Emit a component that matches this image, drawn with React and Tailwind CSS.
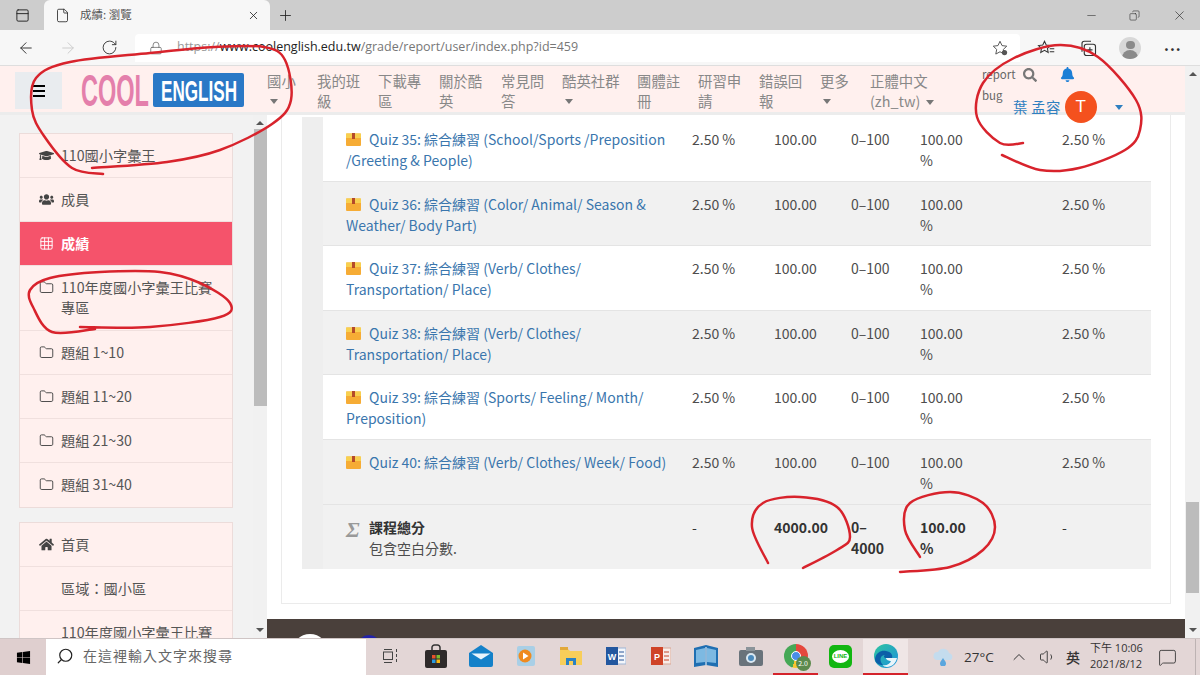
import React from "react";
import {
  ArrowLeft,
  ArrowRight,
  Copy,
  File,
  Folder,
  Grid3x3,
  Lock,
  Minus,
  Plus,
  RotateCw,
  Search,
  X,
  ChevronUp,
  Volume1,
  MessageSquare,
  PanelTop,
} from "lucide-react";
import { FaBell, FaGraduationCap, FaHome, FaSearch, FaUsers, FaWindows } from "react-icons/fa";

const navItems = [
  { lines: ["國小"], caret: true, width: "w-[50px]" },
  { lines: ["我的班", "級"], width: "w-[61px]" },
  { lines: ["下載專", "區"], width: "w-[61px]" },
  { lines: ["關於酷", "英"], width: "w-[62px]" },
  { lines: ["常見問", "答"], width: "w-[61px]" },
  { lines: ["酷英社群"], caret: true, width: "w-[75px]" },
  { lines: ["團體註", "冊"], width: "w-[61px]" },
  { lines: ["研習申", "請"], width: "w-[61px]" },
  { lines: ["錯誤回", "報"], width: "w-[61px]" },
  { lines: ["更多"], caret: true, width: "w-[50px]" },
];

const quizRows = [
  "Quiz 35: 綜合練習 (School/Sports /Preposition /Greeting & People)",
  "Quiz 36: 綜合練習 (Color/ Animal/ Season & Weather/ Body Part)",
  "Quiz 37: 綜合練習 (Verb/ Clothes/ Transportation/ Place)",
  "Quiz 38: 綜合練習 (Verb/ Clothes/ Transportation/ Place)",
  "Quiz 39: 綜合練習 (Sports/ Feeling/ Month/ Preposition)",
  "Quiz 40: 綜合練習 (Verb/ Clothes/ Week/ Food)",
];

const marks = [
  [[92, 168], [167, 162], [220, 150], [272, 124], [291, 100], [285, 60], [264, 47], [215, 47], [150, 53], [70, 62], [36, 78], [32, 110], [44, 136], [72, 168], [103, 174]],
  [[1023, 143], [1000, 143], [977, 117], [983, 83], [1014, 58], [1060, 45], [1098, 57], [1136, 100], [1140, 130], [1125, 150], [1079, 168], [1040, 170], [1002, 155]],
  [[95, 329], [52, 332], [33, 307], [30, 290], [50, 278], [100, 272], [160, 272], [200, 283], [230, 303], [220, 317], [150, 327], [80, 327]],
  [[768, 563], [752, 527], [763, 503], [800, 497], [837, 507], [850, 537], [837, 550], [803, 568]],
  [[920, 557], [905, 530], [910, 503], [950, 492], [983, 503], [995, 527], [983, 550], [950, 567], [900, 572]],
];

// smooth hand-drawn stroke through the points
const toPath = (pts) => {
  let d = `M${pts[0][0]} ${pts[0][1]}`;
  for (let i = 0; i < pts.length - 1; i++) {
    const p0 = pts[i - 1] || pts[i];
    const p1 = pts[i];
    const p2 = pts[i + 1];
    const p3 = pts[i + 2] || p2;
    d += ` C${p1[0] + (p2[0] - p0[0]) / 6} ${p1[1] + (p2[1] - p0[1]) / 6} ${p2[0] - (p3[0] - p1[0]) / 6} ${p2[1] - (p3[1] - p1[1]) / 6} ${p2[0]} ${p2[1]}`;
  }
  return d;
};

const Caret = ({ className = "border-t-[#777]" }) => (
  <span className={`inline-block w-0 h-0 border-x-[4.5px] border-x-transparent border-t-[5px] ${className}`} />
);

const SideItem = ({ icon: Icon, iconClass, active, tall, children }) => (
  <div
    className={`flex gap-[6px] pl-[18px] pr-[14px] border-b border-[#f0e0de] last:border-b-0 ${
      tall ? "h-[65px]" : "h-[44px]"
    } ${active ? "bg-[#f5536b] text-white font-bold" : "text-[#555]"} items-start pt-[11px]`}
  >
    <span className="w-[17px] h-[20px] flex items-center justify-center shrink-0">
      {Icon && <Icon size={15} strokeWidth={1.500} className={iconClass || (active ? "text-white" : "text-[#444]")} />}
    </span>
    <span className="leading-[20px]">{children}</span>
  </div>
);

const QuizIcon = () => (
  <svg width="15" height="13" viewBox="0 0 15 13" className="inline-block mr-[8px] align-[-1px]">
    <rect y="0.5" width="15" height="12.5" rx="1" fill="#f6ac35" />
    <rect y="0.5" width="15" height="4.5" fill="#f8d04f" />
    <rect x="6" y="0" width="3" height="6" fill="#b5492a" />
  </svg>
);

const QuizRow = ({ title, grey }) => (
  <div
    className={`grid grid-cols-[369px_82px_77px_69px_142px_88px] h-[64.6px] pt-[12px] border-b border-[#e4e4e4] ${
      grey ? "bg-[#f1f1f1]" : "bg-white"
    }`}
  >
    <div className="pl-[23px] pr-[20px] text-[#3a76ad]">
      <QuizIcon />
      {title}
    </div>
    <div>2.50 %</div>
    <div>100.00</div>
    <div>0–100</div>
    <div>
      100.00
      <br />%
    </div>
    <div>2.50 %</div>
  </div>
);

const TaskSlot = ({ active, underline, children }) => (
  <div
    className={`w-[45px] h-full flex items-center justify-center shrink-0 border-b-2 ${
      underline ? "border-b-[#d4232b]" : "border-b-transparent"
    } ${active ? "bg-[#efe6e6]" : ""}`}
  >
    {children}
  </div>
);

const Taskbar = () => (
  <div className="h-[37px] shrink-0 flex bg-[#e3d6d6] border-t border-[#cfc5c5] text-[#333]">
    <div className="w-[46px] flex items-center justify-center bg-[#dfcfcf]">
      <FaWindows className="text-[15px] text-black" />
    </div>
    <div className="w-[320px] flex items-center gap-[9px] pl-[10px] pb-[3px] bg-white text-[14px] tracking-[1px] text-[#666]">
      <Search size={18} strokeWidth={1.600} className="-scale-x-100 text-[#222]" />
      <span>在這裡輸入文字來搜尋</span>
    </div>
    <div className="flex h-full pl-[2px]">
      <TaskSlot>
        <svg width="16" height="16" viewBox="0 0 16 16" fill="none" stroke="#444" strokeWidth="1">
          <rect x="0.5" y="4" width="9" height="7.5" />
          <path d="M1 1.500h8M1 14.500h8M13.500 1v3M13.500 6v3M13.500 11v3" />
        </svg>
      </TaskSlot>
      <TaskSlot>
        <svg width="22" height="24" viewBox="0 0 22 24">
          <path d="M7 6V3.500A2.500 2.500 0 0 1 9.500 1h3A2.500 2.500 0 0 1 15 3.500V6" fill="none" stroke="#333" strokeWidth="1.500" />
          <rect y="6" width="22" height="18" rx="2" fill="#2e2a2a" />
          <rect x="7" y="11" width="3.500" height="3.500" fill="#e8502c" />
          <rect x="11.500" y="11" width="3.500" height="3.500" fill="#7fba2e" />
          <rect x="7" y="15.500" width="3.500" height="3.500" fill="#2a9ae0" />
          <rect x="11.500" y="15.500" width="3.500" height="3.500" fill="#f7b814" />
        </svg>
      </TaskSlot>
      <TaskSlot>
        <svg width="24" height="22" viewBox="0 0 24 22">
          <path d="M0 8 12 0l12 8v12a2 2 0 0 1-2 2H2a2 2 0 0 1-2-2z" fill="#1481c9" />
          <path d="M2.500 8.500h19L12 14.500z" fill="#e9f5fc" />
        </svg>
      </TaskSlot>
      <TaskSlot>
        <svg width="20" height="22" viewBox="0 0 20 22">
          <rect x="1" y="1" width="18" height="20" rx="2" fill="#a9cfe6" />
          <circle cx="9" cy="11" r="6.500" fill="#ef8a1f" />
          <path d="M7 7.500 12.500 11 7 14.500z" fill="#fff" />
        </svg>
      </TaskSlot>
      <TaskSlot>
        <svg width="22" height="18" viewBox="0 0 22 18">
          <path d="M0 2h8l2 2h12v14H0z" fill="#f8ce5a" />
          <rect y="0" width="8" height="3" fill="#e2a93a" />
          <path d="M6 11h10v7h-3v-4H9v4H6z" fill="#2b82c4" />
        </svg>
      </TaskSlot>
      <TaskSlot>
        <svg width="20" height="20" viewBox="0 0 20 20">
          <rect x="6" y="2" width="14" height="16" fill="#f3f6fb" stroke="#9db4d4" />
          <path d="M13 6h5M13 10h5M13 14h5" stroke="#2a5699" />
          <rect y="1" width="12" height="18" fill="#23579f" />
          <text x="6" y="14" textAnchor="middle" fontSize="9" fontWeight="700" fill="#fff" fontFamily="Liberation Sans">W</text>
        </svg>
      </TaskSlot>
      <TaskSlot>
        <svg width="20" height="20" viewBox="0 0 20 20">
          <rect x="6" y="2" width="14" height="16" fill="#f8ede9" stroke="#d9a695" />
          <path d="M13 6h5M13 10h5M13 14h5" stroke="#c4472a" />
          <rect y="1" width="12" height="18" fill="#cf4327" />
          <text x="6" y="14" textAnchor="middle" fontSize="9" fontWeight="700" fill="#fff" fontFamily="Liberation Sans">P</text>
        </svg>
      </TaskSlot>
      <TaskSlot>
        <svg width="24" height="24" viewBox="0 0 24 24">
          <path d="M0 4 12 1l12 3v19l-12-2-12 2z" fill="#1f6fb2" />
          <path d="M2 6l9-2v14l-9 1zM13 4l9 2v13l-9-1z" fill="#7db9e2" />
          <path d="M12 3v18" stroke="#fff" />
        </svg>
      </TaskSlot>
      <TaskSlot>
        <svg width="24" height="19" viewBox="0 0 24 19">
          <rect y="3" width="24" height="16" rx="2" fill="#69737b" />
          <rect x="7" y="0" width="9" height="4" fill="#8b949a" />
          <circle cx="12" cy="11" r="5" fill="#d9e8f2" />
          <circle cx="12" cy="11" r="3" fill="#4b8bbd" />
        </svg>
      </TaskSlot>
      <TaskSlot underline>
        <div className="relative w-[24px] h-[24px] rounded-full bg-[conic-gradient(#e5483d_0_33%,#f7c531_33%_55%,#46a856_55%_100%)] flex items-center justify-center">
          <span className="w-[10px] h-[10px] rounded-full bg-[#4a8ee8] border border-white" />
          <span className="absolute -right-[3px] -bottom-[3px] w-[15px] h-[15px] rounded-full bg-[#5c8a4e] text-[7px] leading-[15px] text-center text-white">2.0</span>
        </div>
      </TaskSlot>
      <TaskSlot>
        <div className="w-[23px] h-[23px] rounded-[5px] bg-[#12b611] flex items-center justify-center">
          <span className="w-[17px] h-[13px] rounded-[50%] bg-white text-[#12b611] text-[6px] font-bold leading-[13px] text-center font-['Liberation_Sans']">LINE</span>
        </div>
      </TaskSlot>
      <TaskSlot active underline>
        <svg width="24" height="24" viewBox="0 0 24 24">
          <defs>
            <linearGradient id="edgeA" x1="0" y1="0" x2="1" y2="1">
              <stop offset="0" stopColor="#2fc5a0" />
              <stop offset="1" stopColor="#1b8fdc" />
            </linearGradient>
          </defs>
          <circle cx="12" cy="12" r="12" fill="url(#edgeA)" />
          <path d="M1 15C2 8 8 6 12 7c5 1 7 4 6 7h-6c-2 0-3-2-1-3-5 0-6 6-2 10C5 21 1 19 1 15z" fill="#0c5fa8" />
          <path d="M12 14h11c-1 5-5 9-10 9-2 0-4-1-4-2 3 1 7-1 8-4-2 0-5-1-5-3z" fill="#fff" opacity="0.9" />
        </svg>
      </TaskSlot>
    </div>
    <div className="flex items-center h-full grow text-[14px] border-r border-[#bdb3b3] mr-[4px]">
      <svg width="26" height="18" viewBox="0 0 26 18" className="ml-[24px]">
        <path d="M5 12a4 4 0 0 1 1-8 6 6 0 0 1 11 1 4 4 0 0 1 2 7z" fill="#c4dcee" />
        <path d="M11 10c2 3 3 4 3 5.500a3 3 0 0 1-6 0c0-1.500 1-2.500 3-5.500z" fill="#5aa6de" />
      </svg>
      <span className="ml-[6px] w-[30px] text-[13.500px] font-['Open_Sans']">27°C</span>
      <ChevronUp size={20} strokeWidth={1.200} className="ml-[15px]" />
      <Volume1 size={18} strokeWidth={1.200} className="ml-[10px]" />
      <span className="ml-[9px] text-[14px] font-medium">英</span>
      <div className="ml-[10px] w-[53px] pb-[2px] text-[11px] leading-[16px] whitespace-nowrap font-['Open_Sans','Noto_Sans_CJK_TC']">
        下午 10:06
        <br />
        2021/8/12
      </div>
      <MessageSquare size={19} strokeWidth={1.100} className="ml-[15px]" />
    </div>
  </div>
);

const BrowserChrome = () => (
  <>
    <div className="h-[30px] shrink-0 bg-[#cdcdcd] flex items-end text-[#222]">
      <div className="w-[44px] h-[30px] flex items-center justify-center">
        <PanelTop size={15} strokeWidth={1.500} />
      </div>
      <div className="w-[226px] h-[30px] bg-[#f7f7f7] rounded-t-[6px] flex items-center pl-[11px] pr-[10px]">
        <File size={15} strokeWidth={1.300} />
        <span className="ml-[10px] text-[11.500px] text-[#555]">成績: 瀏覽</span>
        <X size={13} strokeWidth={1.500} className="ml-auto" />
      </div>
      <div className="w-[30px] h-[30px] flex items-center justify-center">
        <Plus size={17} strokeWidth={1.200} />
      </div>
      <div className="ml-auto flex h-[30px] items-center">
        <Minus size={13} strokeWidth={1} className="mr-[31px]" />
        <Copy size={11} strokeWidth={1.200} className="mr-[32px] -scale-x-100" />
        <X size={15} strokeWidth={1} className="mr-[13px]" />
      </div>
    </div>
    <div className="h-[36px] shrink-0 bg-[#f7f7f7] flex items-center border-b border-[#dedede] text-[#333]">
      <ArrowLeft size={18} strokeWidth={1.300} className="ml-[17px]" />
      <ArrowRight size={18} strokeWidth={1.300} className="ml-[24px] text-[#ccc]" />
      <RotateCw size={17} strokeWidth={1.300} className="ml-[24px]" />
      <div className="ml-[17px] w-[885px] h-[28px] bg-white rounded-t-[4px] flex items-center pl-[14px] pr-[11px] text-[12.500px] font-['Open_Sans'] text-[#777]">
        <Lock size={14} strokeWidth={1.300} className="text-[#666]" />
        <span className="ml-[14px] text-[#999]">https://</span>
        <span className="text-[#222]">www.coolenglish.edu.tw</span>
        <span>/grade/report/user/index.php?id=459</span>
        <svg width="18" height="18" viewBox="0 0 24 24" fill="none" stroke="#555" strokeWidth="1.300" className="ml-auto">
          <path d="m12 3 2.700 5.800 6.300.8-4.600 4.300 1.200 6.200L12 17l-5.600 3.100 1.200-6.200L3 9.600l6.300-.8z" />
          <circle cx="18" cy="18" r="3.500" fill="#555" stroke="none" />
        </svg>
      </div>
      <svg width="18" height="18" viewBox="0 0 24 24" fill="none" stroke="#333" strokeWidth="1.400" className="ml-[17px]">
        <path d="m10 3 2.300 5 5.700.7-4.100 3.900 1 5.400-4.900-2.800L5 18l1-5.400L2 8.700 7.700 8zM17 13h6M17 17h6" />
      </svg>
      <svg width="18" height="18" viewBox="0 0 24 24" fill="none" stroke="#333" strokeWidth="1.500" className="ml-[24px]">
        <rect x="7" y="7" width="15" height="15" rx="3" />
        <path d="M14.500 11v7M11 14.500h7M4 17V6a3 3 0 0 1 3-3h9" />
      </svg>
      <div className="ml-[22px] w-[22px] h-[22px] rounded-full bg-[#d8d8d8] overflow-hidden flex flex-col items-center">
        <span className="mt-[4px] w-[9px] h-[9px] rounded-full bg-[#8a8a8a]" />
        <span className="mt-[1px] w-[16px] h-[10px] rounded-t-full bg-[#8a8a8a]" />
      </div>
      <span className="ml-[23px] text-[15px] leading-none font-bold tracking-[1px] -mt-[7px]">...</span>
    </div>
  </>
);

const TopNav = () => (
  <div className="relative z-10 h-[49px] shrink-0 bg-[#fff0ee] flex border-b-[3px] border-[#ececec] text-[#888] text-[14.400px] leading-[20.500px]">
    <div className="ml-[15px] mt-[6px] w-[47px] h-[37px] bg-[#e9ecef] flex items-center justify-center">
      <div className="flex flex-col gap-[3px] w-[12px]">
        <span className="h-[2px] bg-black" />
        <span className="h-[2px] bg-black" />
        <span className="h-[2px] bg-black" />
      </div>
    </div>
    <div className="ml-[18px] mt-[7px] w-[164px] h-[34px] flex gap-[3px] shrink-0">
      <svg width="70" height="34" viewBox="0 0 70 34" className="overflow-hidden shrink-0">
        <text x="1" y="33" fontSize="44" fontWeight="700" fill="#e47fab" fontFamily="Liberation Sans" textLength="68" lengthAdjust="spacingAndGlyphs">COOL</text>
      </svg>
      <div className="w-[91px] h-[34px] shrink-0 bg-[#2a78c6] rounded-[2px] flex items-center justify-center">
        <svg width="78" height="24" viewBox="0 0 78 24" className="overflow-hidden">
          <text x="1" y="23" fontSize="30" fontWeight="700" fill="#fff" fontFamily="Liberation Sans" textLength="76" lengthAdjust="spacingAndGlyphs">ENGLISH</text>
        </svg>
      </div>
    </div>
    <div className="ml-[23px] pt-[4.500px] flex">
      {navItems.map((item) => (
        <div key={item.lines[0]} className={`${item.width} shrink-0`}>
          {item.lines.map((line) => (
            <div key={line}>{line}</div>
          ))}
          {item.caret && (
            <div className="pl-[3px] h-[20px] flex items-center">
              <Caret />
            </div>
          )}
        </div>
      ))}
      <div className="w-[100px] shrink-0">
        正體中文
        <div className="whitespace-nowrap">
          (zh_tw) <Caret className="ml-[2px] mb-[2px] border-t-[#777]" />
        </div>
      </div>
    </div>
    <div className="ml-[12px] w-[33px] shrink-0 text-[11.500px] leading-[21px] text-[#666]">
      <div className="-mt-[2px]">report</div>
      <div>bug</div>
    </div>
    <div className="flex flex-col shrink-0">
      <div className="flex items-center h-[17px] shrink-0 pl-[8px]">
        <FaSearch className="text-[14px] text-[#777]" />
        <FaBell className="ml-[23px] text-[15px] text-[#1c7fd6]" />
      </div>
      <div className="flex items-center h-[26px] shrink-0 text-[#2f7fc0] -ml-[2px] mt-[11px]">
        <span className="tracking-[0.300px] whitespace-nowrap">葉 孟容</span>
        <span className="ml-[4px] w-[32px] h-[32px] shrink-0 rounded-full bg-[#f4511e] text-white text-[17px] leading-[32px] text-center font-['Liberation_Sans']">T</span>
        <Caret className="ml-[18px] border-t-[#2f7fc0]" />
      </div>
    </div>
  </div>
);

const Sidebar = () => (
  <div className="w-[253px] shrink-0 bg-[#f2f2f2] pt-[18px] pl-[19px] pr-[20px] text-[14.200px] overflow-hidden">
    <div className="border border-[#ecdcda] bg-[#fff0ee]">
      <SideItem icon={FaGraduationCap}>110國小字彙王</SideItem>
      <SideItem icon={FaUsers}>成員</SideItem>
      <SideItem icon={Grid3x3} active>成績</SideItem>
      <SideItem icon={Folder} tall>
        110年度國小字彙王比賽
        <br />
        專區
      </SideItem>
      <SideItem icon={Folder}>題組 1~10</SideItem>
      <SideItem icon={Folder}>題組 11~20</SideItem>
      <SideItem icon={Folder}>題組 21~30</SideItem>
      <SideItem icon={Folder}>題組 31~40</SideItem>
    </div>
    <div className="mt-[14px] border border-[#ecdcda] bg-[#fff0ee]">
      <SideItem icon={FaHome}>首頁</SideItem>
      <SideItem>區域：國小區</SideItem>
      <SideItem>110年度國小字彙王比賽</SideItem>
    </div>
  </div>
);

const ScrollBar = ({ thumbTop, thumbHeight, width }) => (
  <div className={`${width} shrink-0 bg-[#f1f1f1] flex flex-col items-center`}>
    <span className="mt-[6px] w-0 h-0 border-x-[4px] border-x-transparent border-b-[4px] border-b-[#555]" />
    <div className={`w-full ${thumbTop}`}>
      <div className={`${thumbHeight} mx-auto w-[13px] bg-[#bcbcbc]`} />
    </div>
    <span className="mt-auto mb-[6px] w-0 h-0 border-x-[4px] border-x-transparent border-t-[4px] border-t-[#555]" />
  </div>
);

const GradeTable = () => (
  <div className="ml-[14px] w-[890px] h-[489px] shrink-0 border-x border-b border-[#ebebeb] pt-[2px] pl-[20px] overflow-hidden">
    <div className="w-[849px] pl-[21px] bg-[#eeeeee] text-[14px] leading-[21px] text-[#4d4d4d]">
      {quizRows.map((title, i) => (
        <QuizRow key={title} title={title} grey={i % 2 === 1} />
      ))}
      <div className="grid grid-cols-[369px_82px_77px_69px_142px_88px] h-[64px] pt-[12px] bg-[#f1f1f1] text-[#333]">
        <div className="pl-[23px] flex">
          <span className="w-[23px] text-[22px] leading-[21px] mt-[2px] font-bold italic text-[#999] font-['Liberation_Serif']">Σ</span>
          <div>
            <div className="font-bold">課程總分</div>
            <div className="font-normal text-[#4d4d4d]">包含空白分數.</div>
          </div>
        </div>
        <div>-</div>
        <div className="font-bold">4000.00</div>
        <div className="font-bold">
          0–
          <br />
          4000
        </div>
        <div className="font-bold">
          100.00
          <br />%
        </div>
        <div>-</div>
      </div>
    </div>
  </div>
);

export default function App() {
  return (
    <div className="relative w-[1200px] h-[675px] overflow-hidden flex flex-col bg-white font-['Noto_Sans_CJK_TC',sans-serif]">
      <BrowserChrome />
      <div className="flex h-[572px] shrink-0">
        <div className="w-[1185px] shrink-0 flex flex-col">
          <TopNav />
          <div className="flex h-[523px]">
            <Sidebar />
            <ScrollBar width="w-[14px]" thumbTop="mt-[4px]" thumbHeight="h-[277px]" />
            <div className="flex flex-col grow overflow-hidden">
              <GradeTable />
              <div className="mt-[15px] h-[19px] shrink-0 bg-[#4a403b] relative overflow-hidden">
                <span className="absolute left-[25px] top-[15px] w-[36px] h-[36px] rounded-full bg-white" />
                <span className="absolute left-[90px] top-[16px] w-[24px] h-[24px] rounded-full bg-[#2222aa]" />
              </div>
            </div>
          </div>
        </div>
        <ScrollBar width="w-[15px]" thumbTop="mt-[426px]" thumbHeight="h-[91px]" />
      </div>
      <Taskbar />
      <svg width="1200" height="675" className="absolute inset-0 z-20 pointer-events-none" fill="none" stroke="#d8232c" strokeWidth="2.500" strokeLinecap="round">
        {marks.map((pts) => (
          <path key={pts[0].join()} d={toPath(pts)} />
        ))}
      </svg>
    </div>
  );
}
